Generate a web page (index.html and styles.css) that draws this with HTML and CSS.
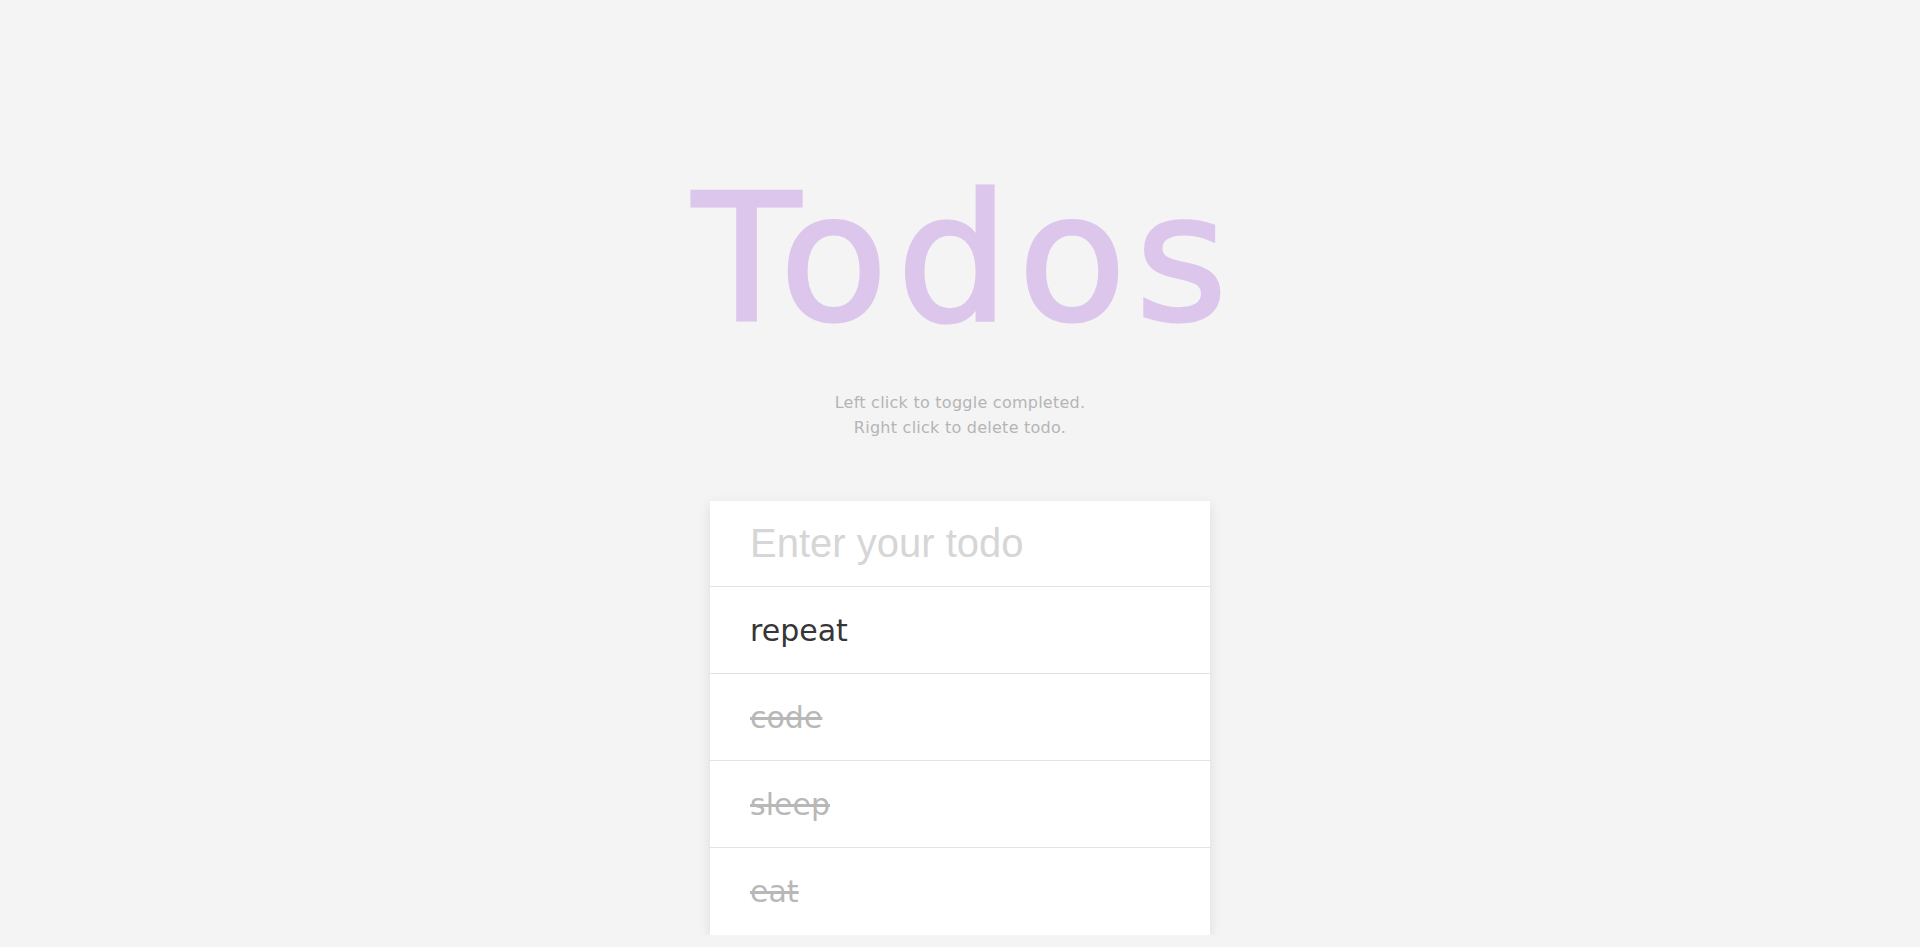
FILE: index.html
```html
<!DOCTYPE html>
<html lang="en">
<head>
<meta charset="utf-8">
<title>Todos</title>
<link rel="stylesheet" href="styles.css">
</head>
<body>
<main class="app">
  <h1 class="title">Todos</h1>
  <p class="hint">Left click to toggle completed.<br>Right click to delete todo.</p>
  <section class="card">
    <input class="todo-input" type="text" placeholder="Enter your todo">
    <ul class="todo-list">
      <li class="todo">repeat</li>
      <li class="todo done">code</li>
      <li class="todo done">sleep</li>
      <li class="todo done">eat</li>
    </ul>
  </section>
</main>
</body>
</html>
```

FILE: styles.css
```css
* { box-sizing: border-box; }

html, body {
  margin: 0;
  padding: 0;
  background: #f4f4f4;
}

body {
  font-family: "DejaVu Sans", "Noto Sans", sans-serif;
  overflow: hidden;
}

.app {
  display: flex;
  flex-direction: column;
  align-items: center;
  padding-top: 171px;
}

.title {
  margin: 0;
  font-family: "DejaVu Sans", sans-serif;
  font-weight: 400;
  font-size: 177px;
  line-height: 1;
  letter-spacing: 9px;
  text-indent: 9px;
  color: #dcc6ec;
  -webkit-text-stroke: 3px #dcc6ec;
}

.hint {
  margin: 42px 0 0;
  text-align: center;
  font-size: 16px;
  line-height: 25px;
  letter-spacing: 0.25px;
  color: #b5b5b5;
}

.card {
  margin-top: 61px;
  width: 500px;
  background: #fff;
  box-shadow: 0 4px 12px rgba(0, 0, 0, 0.1);
  display: flex;
  flex-direction: column;
}

.todo-input {
  height: 86px;
  padding: 0 40px;
  border: none;
  border-bottom: 1px solid #e3e3e3;
  outline: none;
  font-family: "Liberation Sans", Arial, sans-serif;
  font-size: 40px;
  color: #333;
  background: transparent;
}

.todo-input::placeholder {
  color: #d6d6d6;
}

.todo-list {
  list-style: none;
  margin: 0;
  padding: 0;
}

.todo {
  height: 87px;
  padding: 0 40px;
  display: flex;
  align-items: center;
  font-size: 30px;
  color: #363636;
  border-bottom: 1px solid #e3e3e3;
}

.todo:last-child {
  border-bottom: none;
}

.todo.done {
  color: #b8b8b8;
  text-decoration: line-through;
}
```
